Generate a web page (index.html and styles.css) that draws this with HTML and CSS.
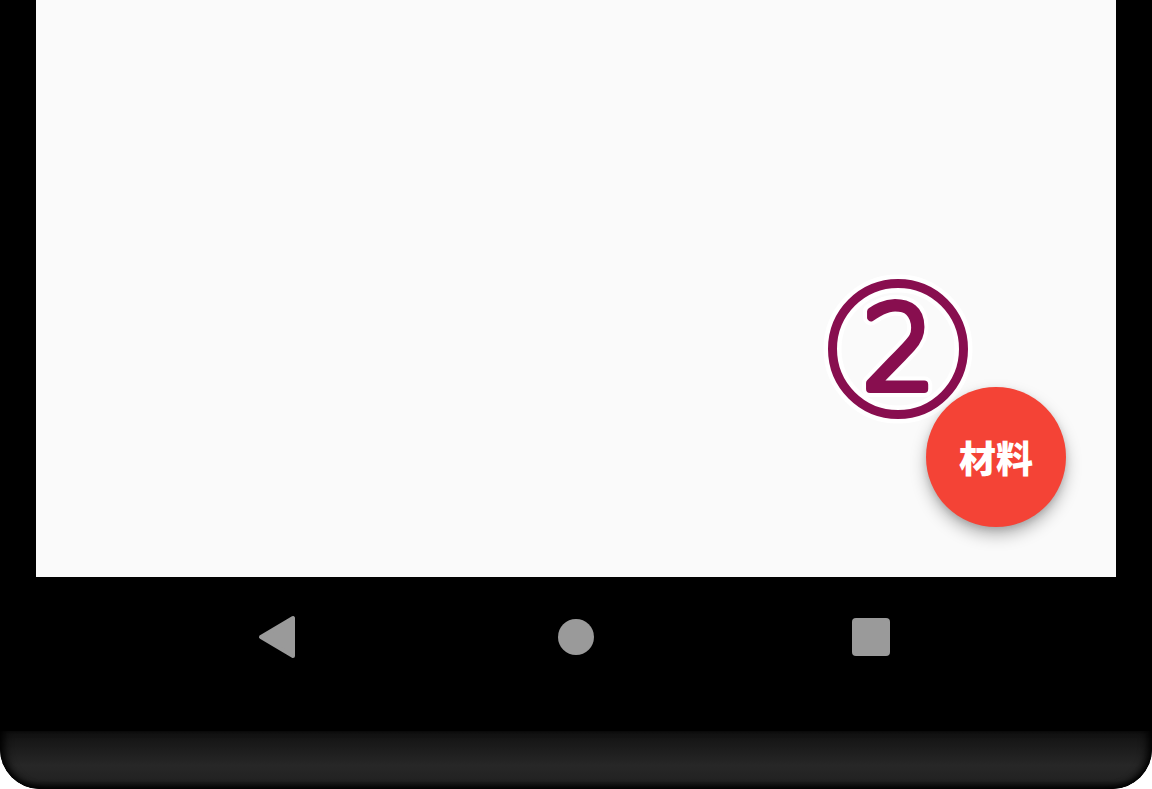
FILE: index.html
```html
<!DOCTYPE html>
<html lang="ja">
<head>
<meta charset="utf-8">
<title>材料</title>
<link rel="stylesheet" href="styles.css">
</head>
<body>
<div class="phone">
  <div class="screen">
    <svg class="step" width="160" height="160" viewBox="0 0 160 160" aria-label="②">
      <circle cx="80" cy="80" r="65.5" fill="none" stroke="#fff" stroke-width="18"/>
      <circle cx="80" cy="80" r="65.5" fill="none" stroke="#880e4f" stroke-width="9"/>
      <text class="num halo" x="81" y="120" text-anchor="middle">2</text>
      <text class="num ink" x="81" y="120" text-anchor="middle">2</text>
    </svg>
    <button class="fab">材料</button>
  </div>
  <div class="navbar">
    <div class="nav-item">
      <svg width="40" height="44" viewBox="0 0 40 44"><polygon points="4,22 36,3 36,41" fill="#9a9a9a" stroke="#9a9a9a" stroke-width="4" stroke-linejoin="round"/></svg>
    </div>
    <div class="nav-item"><span class="home"></span></div>
    <div class="nav-item"><span class="recents"></span></div>
  </div>
  <div class="chin"></div>
</div>
</body>
</html>
```
FILE: styles.css
```css
html, body {
  margin: 0;
  padding: 0;
  background: #ffffff;
}
.phone {
  width: 1152px;
  height: 789px;
  background: #000;
  border-radius: 0 0 40px 40px;
  overflow: hidden;
  display: flex;
  flex-direction: column;
}
.screen {
  position: relative;
  height: 577px;
  margin: 0 36px;
  background: #fafafa;
  flex: none;
}
.step {
  position: absolute;
  left: 782px;
  top: 269px;
  overflow: visible;
}
.num {
  font-family: "DejaVu Sans", sans-serif;
  font-weight: 200;
  font-size: 116px;
  stroke-linejoin: round;
  stroke-linecap: round;
}
.num.halo {
  fill: #fff;
  stroke: #fff;
  stroke-width: 16px;
}
.num.ink {
  fill: #880e4f;
  stroke: #880e4f;
  stroke-width: 8px;
}
.fab {
  position: absolute;
  right: 50px;
  bottom: 50px;
  width: 140px;
  height: 140px;
  border: none;
  border-radius: 50%;
  background: #f44336;
  color: #fff;
  font-family: "Noto Sans CJK JP", sans-serif;
  font-weight: 900;
  font-size: 37px;
  padding: 0;
  display: flex;
  align-items: center;
  justify-content: center;
  box-shadow: 0 8px 16px rgba(0,0,0,0.28), 0 3px 6px rgba(0,0,0,0.12);
}
.navbar {
  height: 154px;
  flex: none;
  display: grid;
  grid-template-columns: 297px 297px 297px;
  justify-content: center;
  align-items: start;
  padding-top: 40px;
  box-sizing: border-box;
}
.nav-item {
  height: 40px;
  display: flex;
  align-items: center;
  justify-content: center;
}
.nav-item:first-child svg { margin-left: -5px; }
.home {
  width: 36px;
  height: 36px;
  border-radius: 50%;
  background: #9a9a9a;
}
.recents {
  width: 38px;
  height: 38px;
  border-radius: 4px;
  background: #9a9a9a;
  margin-left: -4px;
}
.chin {
  flex: 1;
  background: linear-gradient(#111 0%, #1c1c1c 30%, #272727 60%, #222 85%, #111 100%);
  border-radius: 0 0 40px 40px;
  box-shadow: inset 8px 0 10px -4px #000, inset -8px 0 10px -4px #000, inset 0 -4px 6px -2px #000;
}
```
